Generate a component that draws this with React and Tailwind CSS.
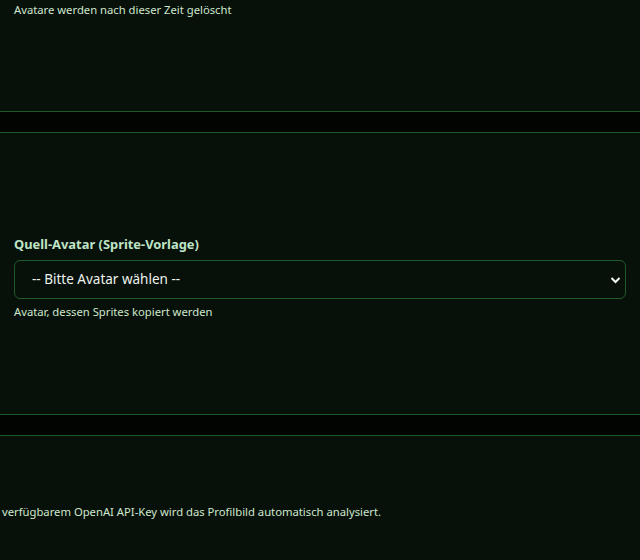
import React from "react";

const Chevron = () => (
  <svg
    width="11"
    height="8"
    viewBox="0 0 11 8"
    className="pointer-events-none absolute right-[5px] top-1/2 -translate-y-1/2"
  >
    <path d="M1.5 2 L5.5 6 L9.5 2" fill="none" stroke="#f2f5f2" strokeWidth="2" />
  </svg>
);

const App = () => {
  return (
    <div className="min-h-[560px] bg-[#020402] flex flex-col gap-5 font-['Noto_Sans',sans-serif] text-[#cfe6cc]">
      {/* Retention section (tail end) */}
      <section className="h-[112px] bg-[#07110a] border-b border-[#1e5a27] px-[14px] pt-[1px]">
        <p className="text-[11.25px] leading-[18px]">Avatare werden nach dieser Zeit gelöscht</p>
      </section>

      {/* Sprite template */}
      <section className="h-[283px] bg-[#07110a] border-y border-[#1e5a27] px-[14px] pt-[101px]">
        <label className="block text-[12.9px] font-bold text-[#bfe3c6] leading-[20px] mb-[6px]">
          Quell-Avatar (Sprite-Vorlage)
        </label>
        <div className="relative w-[612px]">
          <select className="appearance-none w-full h-[39px] rounded-[6px] border border-[#1e5a27] bg-[#07110a] pl-[17px] text-[13.5px] text-[#eef3ee] outline-none">
            <option>-- Bitte Avatar wählen --</option>
          </select>
          <Chevron />
        </div>
        <p className="mt-[4px] text-[11.25px] leading-[18px]">Avatar, dessen Sprites kopiert werden</p>
      </section>

      {/* Auto analysis hint */}
      <section className="flex-1 bg-[#07110a] border-t border-[#1e5a27] px-[2px] pt-[67px]">
        <p className="text-[11.25px] leading-[18px]">
          verfügbarem OpenAI API-Key wird das Profilbild automatisch analysiert.
        </p>
      </section>
    </div>
  );
};

export default App;
